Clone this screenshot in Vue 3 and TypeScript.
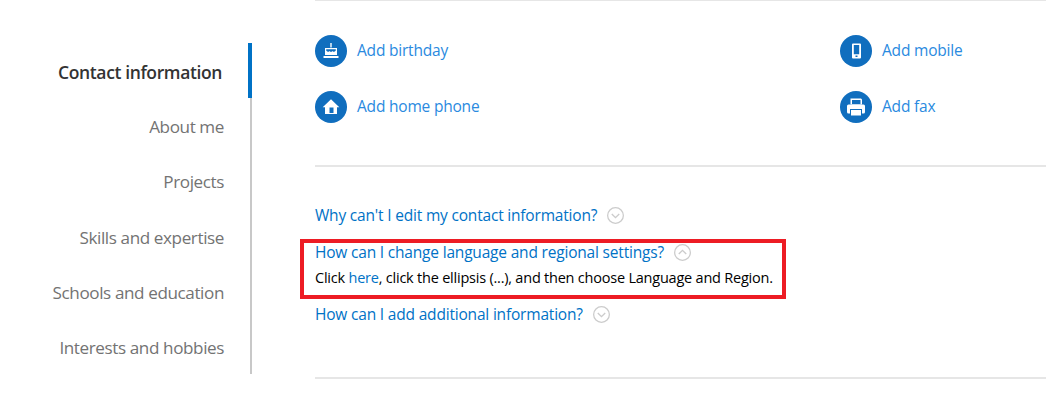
<template>
  <div class="page">
    <nav class="sidebar">
      <a
        v-for="item in navItems"
        :key="item"
        class="nav-item"
        :class="{ active: item === activeItem }"
      >{{ item }}</a>
    </nav>
    <main class="content">
      <section class="actions">
        <a v-for="action in actions" :key="action.label" class="action">
          <span class="action-icon">
            <svg width="32" height="32" viewBox="0 0 32 32">
              <circle cx="16" cy="16" r="16" fill="#106ebe" />
              <path v-for="d in action.paths" :key="d" :d="d" fill="#fff" fill-rule="evenodd" />
            </svg>
          </span>
          <span class="action-label">{{ action.label }}</span>
        </a>
      </section>
      <section class="faq">
        <div class="question first">
          <a>Why can't I edit my contact information?</a>
          <svg class="chevron" width="17" height="17" viewBox="0 0 16 16">
            <circle cx="8" cy="8" r="7.4" fill="none" stroke="#ccc" stroke-width="1.2" />
            <path d="M4.500 6.500L8 10l3.500-3.500" fill="none" stroke="#ccc" stroke-width="1.300" />
          </svg>
        </div>
        <div class="highlight">
          <div class="question">
            <a>How can I change language and regional settings?</a>
            <svg class="chevron" width="17" height="17" viewBox="0 0 16 16">
              <circle cx="8" cy="8" r="7.4" fill="none" stroke="#ccc" stroke-width="1.2" />
              <path d="M4.500 9.500L8 6l3.500 3.500" fill="none" stroke="#ccc" stroke-width="1.300" />
            </svg>
          </div>
          <p class="answer">Click <a>here</a>, click the ellipsis (...), and then choose Language and Region.</p>
        </div>
        <div class="question">
          <a>How can I add additional information?</a>
          <svg class="chevron" width="17" height="17" viewBox="0 0 16 16">
            <circle cx="8" cy="8" r="7.4" fill="none" stroke="#ccc" stroke-width="1.2" />
            <path d="M4.500 6.500L8 10l3.500-3.500" fill="none" stroke="#ccc" stroke-width="1.300" />
          </svg>
        </div>
      </section>
    </main>
  </div>
</template>

<script setup lang="ts">
interface Action {
  label: string
  paths: string[]
}

const activeItem = 'Contact information'

const navItems: string[] = [
  'Contact information',
  'About me',
  'Projects',
  'Skills and expertise',
  'Schools and education',
  'Interests and hobbies',
]

const actions: Action[] = [
  {
    label: 'Add birthday',
    paths: [
      'M15.300 8h1.400v4.500h-1.400z',
      'M10 13h12v7H10zM11.200 15.500c1.200 1.600 2.400 1.600 3.200.400.800 1.200 2.400 1.200 3.200 0 .800 1.200 2 1.200 3.200-.400v-1.200h-9.600z',
      'M8.500 21h15v2h-15z',
    ],
  },
  {
    label: 'Add mobile',
    paths: ['M13 8.500h7a1 1 0 011 1v13a1 1 0 01-1 1h-7a1 1 0 01-1-1v-13a1 1 0 011-1zM13.800 10v9.200h5.400V10zM15.500 20.500v1.500h2v-1.500z'],
  },
  {
    label: 'Add home phone',
    paths: ['M16 8.300l8.300 7.900H22V23H10v-6.800H7.700zM14.500 16.500V22h4v-5.500z'],
  },
  {
    label: 'Add fax',
    paths: [
      'M10.500 7.500h10.500l1 1v5H10.500zM12 9v4h8.500V9z',
      'M8.500 13.500h15a1.500 1.500 0 011.500 1.500v6a1.500 1.500 0 01-1.500 1.500H22V18H10v4.500H8.500A1.500 1.500 0 017 21v-6a1.500 1.500 0 011.500-1.500z',
      'M11 19h10v5.500H11z',
    ],
  },
]
</script>

<style>
body {
  background: #fff;
}
</style>

<style scoped>
.page {
  display: flex;
  width: 1046px;
  height: 403px;
  overflow: hidden;
  font-family: "Open Sans", "Noto Sans", sans-serif;
  background: #fff;
}

.sidebar {
  display: flex;
  flex-direction: column;
  align-items: flex-end;
  width: 252px;
  height: 331px;
  margin-top: 43px;
  box-sizing: border-box;
  border-right: 2px solid #c8c8c8;
}

.nav-item {
  position: relative;
  height: 55.2px;
  line-height: 58px;
  padding-right: 26px;
  font-size: 17.1px;
  letter-spacing: -0.4px;
  color: #737373;
  white-space: nowrap;
}

.nav-item.active {
  padding-right: 28px;
  font-size: 17.5px;
  letter-spacing: -0.38px;
  font-weight: 600;
  color: #333;
}

.nav-item.active::after {
  content: "";
  position: absolute;
  top: 0;
  right: -2px;
  width: 4px;
  height: 55px;
  background: #0072c6;
}

.content {
  flex: 1;
  margin-left: 63px;
  border-top: 1px solid #e6e6e6;
}

.actions {
  display: grid;
  grid-template-columns: 525px 1fr;
  row-gap: 24px;
  height: 166px;
  box-sizing: border-box;
  padding-top: 34px;
  align-content: start;
  border-bottom: 2px solid #e6e6e6;
}

.action {
  display: flex;
  align-items: center;
  gap: 10px;
  height: 32px;
}

.action-icon {
  display: flex;
}

.action-label {
  padding-bottom: 2px;
  font-size: 15.5px;
  letter-spacing: -0.2px;
  color: #2a8ae0;
}

.faq {
  height: 212px;
  box-sizing: border-box;
  padding-top: 36px;
  border-bottom: 2px solid #e6e6e6;
  font-size: 15.5px;
  letter-spacing: -0.19px;
}

.question {
  display: flex;
  align-items: center;
  gap: 10px;
  height: 24px;
  color: #0072c6;
}

.question.first {
  margin-bottom: 12px;
}

.highlight {
  width: 486px;
  height: 60px;
  box-sizing: border-box;
  margin-left: -15px;
  margin-bottom: 3px;
  padding: 0 0 0 11px;
  border: 4px solid #ed1c24;
}

.highlight .question {
  height: 18px;
}

.answer {
  margin: 0;
  font-size: 14.5px;
  line-height: 34px;
  letter-spacing: -0.22px;
  color: #000;
  white-space: nowrap;
}

.answer a {
  color: #0072c6;
}
</style>
